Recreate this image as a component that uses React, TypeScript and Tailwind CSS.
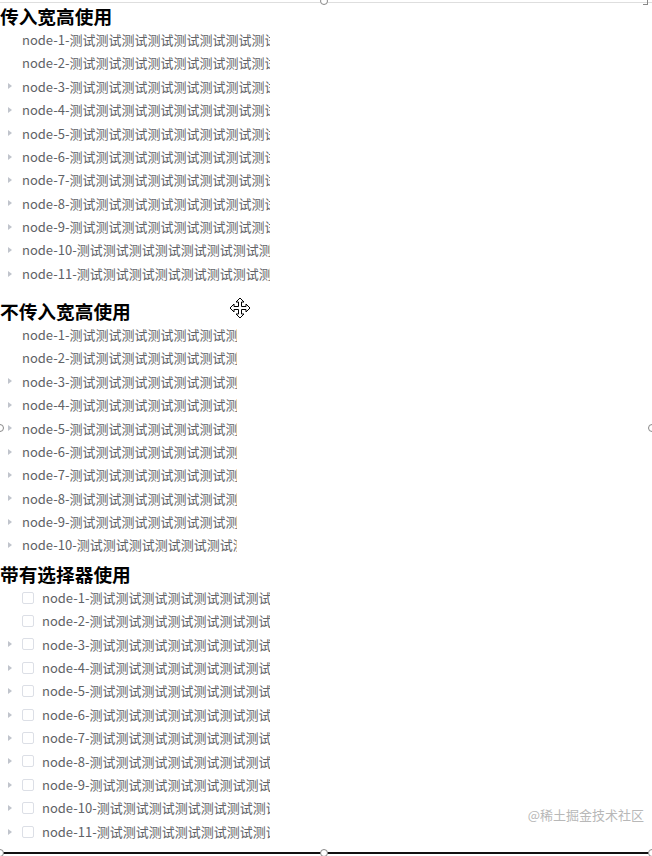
import React from "react";

const label = (i: number) => `node-${i}-` + "测试".repeat(24);

function Arrow() {
  return (
    <svg width="6" height="8" viewBox="0 0 6 8" className="shrink-0">
      <path d="M1 1 L5 4 L1 7 Z" fill="#c0c4cc" />
    </svg>
  );
}

function Row({ i, check }: { i: number; check?: boolean }) {
  const leaf = i < 3;
  return (
    <div className="flex items-center h-[23.4px] whitespace-nowrap overflow-hidden">
      <div className="w-[22px] shrink-0 flex items-center pl-[7px]">{!leaf && <Arrow />}</div>
      {check && (
        <span className="w-[12px] h-[12px] shrink-0 border border-[#dcdfe6] rounded-[2px] bg-white mr-[8px]" />
      )}
      <span className="text-[13px] text-[#606266]">{label(i)}</span>
    </div>
  );
}

function Heading({ children }: { children: React.ReactNode }) {
  return <h2 className="h-[25px] leading-[25px] text-[18.7px] font-bold text-black whitespace-nowrap">{children}</h2>;
}

function Handle({ className }: { className: string }) {
  return <span className={"absolute w-[8px] h-[8px] rounded-full border border-[#888] bg-white " + className} />;
}

export default function App() {
  const r11 = Array.from({ length: 11 }, (_, k) => k + 1);
  const r10 = Array.from({ length: 10 }, (_, k) => k + 1);
  return (
    <div
      className="relative w-[652px] h-[856px] bg-white overflow-hidden"
      style={{ fontFamily: '"Noto Sans CJK SC", "Noto Sans", sans-serif' }}
    >
      <div className="mt-[2px] h-px bg-[#dedede]" />
      <Heading>传入宽高使用</Heading>
      <div className="w-[270px] h-[270px] overflow-hidden">
        {r11.map((i) => (
          <Row key={i} i={i} />
        ))}
      </div>
      <Heading>不传入宽高使用</Heading>
      <div className="w-[237px] overflow-hidden">
        {r10.map((i) => (
          <Row key={i} i={i} />
        ))}
      </div>
      <div className="mt-[4px]">
        <Heading>带有选择器使用</Heading>
      </div>
      <div className="w-[270px] overflow-hidden">
        {r11.map((i) => (
          <Row key={i} i={i} check />
        ))}
      </div>

      <div className="absolute left-0 right-0 top-[852px] h-[2px] bg-[#111]" />

      <span className="absolute right-[8px] top-[805px] text-[13px] text-[#b8b8b8] tracking-[0px]">@稀土掘金技术社区</span>

      <svg className="absolute left-[229px] top-[297px]" width="22" height="22" viewBox="0 0 22 22">
        <path
          d="M11 1 L15 5 L12.5 5 L12.5 9.5 L17 9.5 L17 7 L21 11 L17 15 L17 12.5 L12.5 12.5 L12.5 17 L15 17 L11 21 L7 17 L9.5 17 L9.5 12.5 L5 12.5 L5 15 L1 11 L5 7 L5 9.5 L9.5 9.5 L9.5 5 L7 5 Z"
          fill="#fff"
          stroke="#000"
          strokeWidth="1"
          strokeLinejoin="miter"
        />
      </svg>

      <Handle className="left-[320px] top-[-3px]" />
      <Handle className="left-[-4px] top-[424px]" />
      <Handle className="left-[648px] top-[424px]" />
      <Handle className="left-[320px] top-[849px]" />
      <Handle className="left-[-4px] top-[849px]" />
      <Handle className="left-[648px] top-[849px]" />
      <span className="absolute left-[643px] top-[0px] w-[5px] h-[5px] border-r border-b border-[#888]" />
    </div>
  );
}
